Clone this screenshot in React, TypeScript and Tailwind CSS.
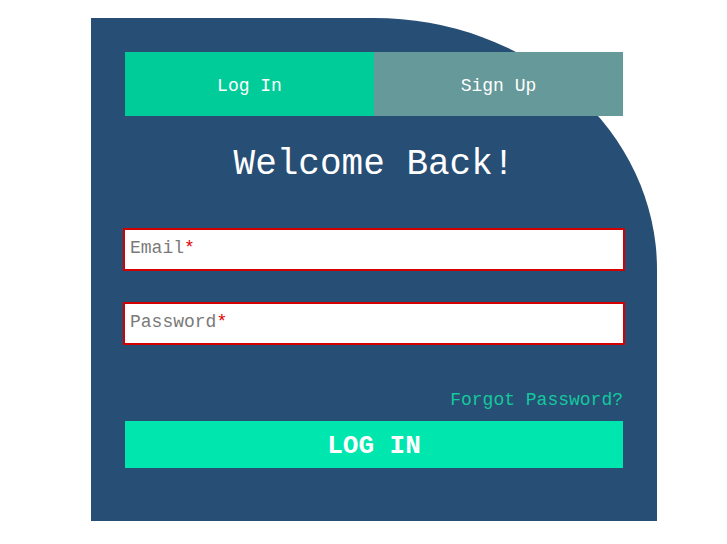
import { useState } from "react";

const mono = "font-['Liberation_Mono','Courier_New',monospace]";

const Field = ({ label, type }: { label: string; type: string }) => {
  const [value, setValue] = useState("");
  return (
    <div className="relative -mx-[2px]">
      <input
        type={type}
        value={value}
        onChange={(e) => setValue(e.target.value)}
        className={`block w-full h-[43px] border-2 border-[#d40000] bg-white px-[5px] text-[18px] text-black outline-none ${mono}`}
      />
      {value === "" && (
        <span className={`pointer-events-none absolute left-[7px] top-[7px] text-[18px] text-[#7a7a7a] ${mono}`}>
          {label}
          <span className="text-[#e00000]">*</span>
        </span>
      )}
    </div>
  );
};

export default function App() {
  const [tab, setTab] = useState<"login" | "signup">("login");

  return (
    <div className={`min-h-[544px] bg-white pl-[91px] pt-[18px] ${mono}`}>
      <div className="flex w-[566px] flex-col rounded-tr-[50%] bg-[#274e74] px-[34px] pt-[34px] pb-[53px]">
        <div className="flex h-[64px]">
          <button
            onClick={() => setTab("login")}
            className={`flex-1 pt-[4px] text-[18px] text-white ${tab === "login" ? "bg-[#00cc99]" : "bg-[#669999]"}`}
          >
            Log In
          </button>
          <button
            onClick={() => setTab("signup")}
            className={`flex-1 pt-[4px] text-[18px] text-white ${tab === "signup" ? "bg-[#00cc99]" : "bg-[#669999]"}`}
          >
            Sign Up
          </button>
        </div>

        <h1 className="mt-[29px] text-center text-[36px] leading-[40px] text-white">Welcome Back!</h1>

        <div className="mt-[43px] flex flex-col gap-[31px]">
          <Field label="Email" type="email" />
          <Field label="Password" type="password" />
        </div>

        <div className="mt-[45px] flex justify-end">
          <a href="#" className="text-[18px] leading-[20px] text-[#14c89e]">
            Forgot Password?
          </a>
        </div>

        <button className="mt-[11px] h-[47px] pt-[3px] bg-[#00e6af] text-[26px] font-bold text-white">
          LOG IN
        </button>
      </div>
    </div>
  );
}
